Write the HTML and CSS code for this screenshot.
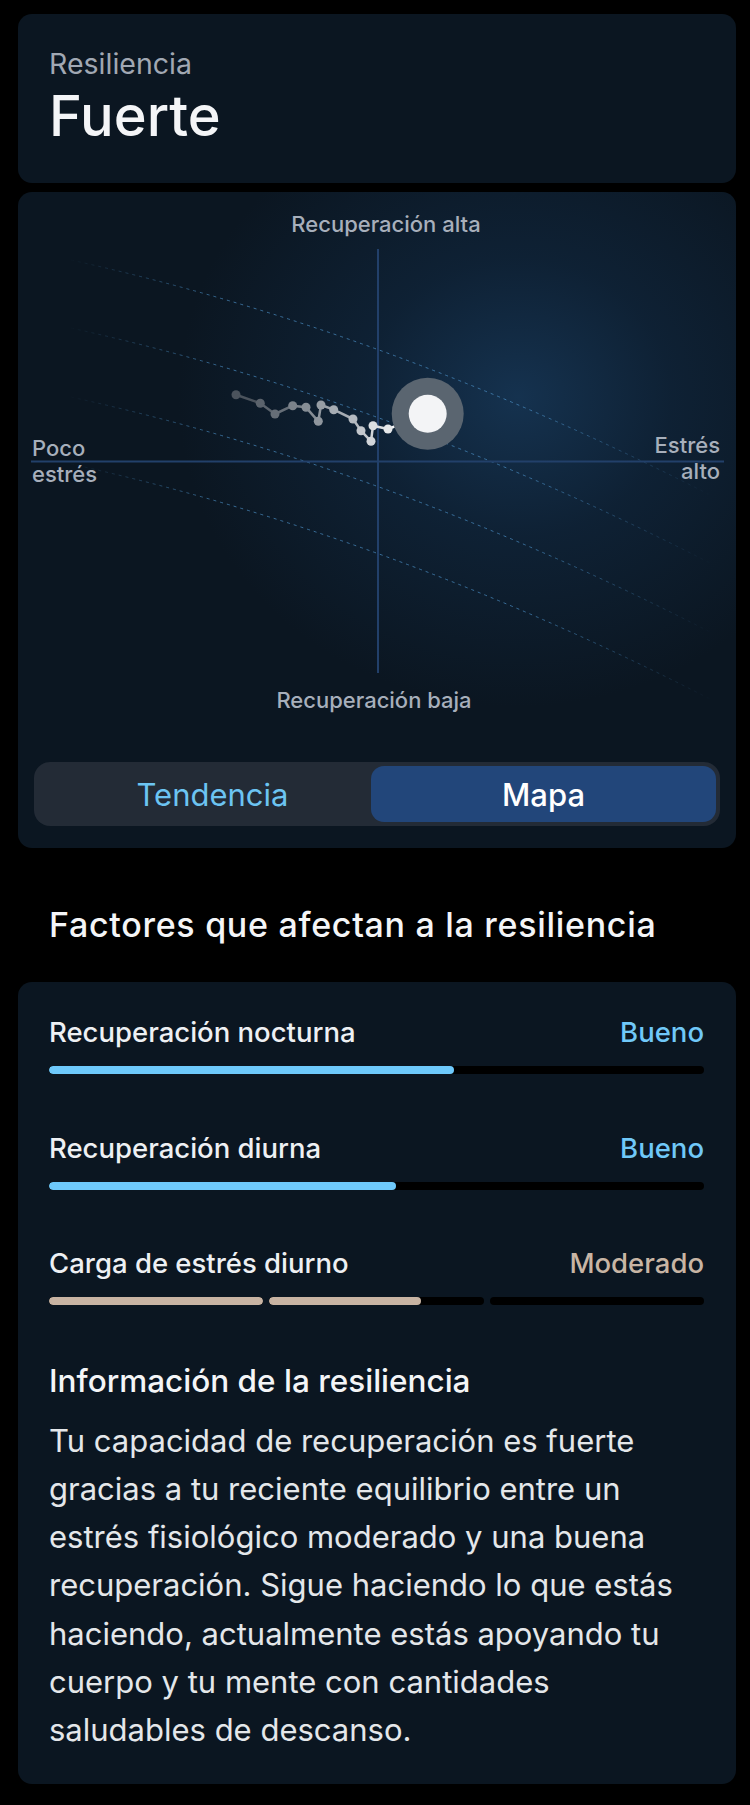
FILE: index.html
```html
<!DOCTYPE html>
<html lang="es">
<head>
    <meta charset="UTF-8">
    <meta name="viewport" content="width=device-width, initial-scale=1.0">
    <title>Resiliencia</title>
    <link rel="stylesheet" href="styles.css">
</head>
<body>
    <!-- Summary -->
    <div class="card summary-card">
        <div class="summary-label">Resiliencia</div>
        <div class="summary-value">Fuerte</div>
    </div>

    <!-- Map -->
    <div class="card map-card">
        <div class="map-plot">
            <svg class="map-svg" viewBox="0 0 718 570" width="718" height="570">
                <defs>
                    <linearGradient id="fade" gradientUnits="userSpaceOnUse" x1="50" y1="0" x2="695" y2="0">
                        <stop offset="0" stop-color="#4a8fc6" stop-opacity="0"/>
                        <stop offset="0.25" stop-color="#4a8fc6" stop-opacity="0.7"/>
                        <stop offset="0.7" stop-color="#4a8fc6" stop-opacity="0.7"/>
                        <stop offset="1" stop-color="#4a8fc6" stop-opacity="0"/>
                    </linearGradient>
                </defs>

                <!-- zone curves -->
                <g fill="none" stroke="url(#fade)" stroke-width="1" stroke-dasharray="3 4">
                    <path d="M53 68 Q371.5 138.5 692 303"/>
                    <path d="M53 136 Q371.5 206.5 692 371"/>
                    <path d="M53 205 Q371.5 275.5 692 440"/>
                    <path d="M53 272 Q371.5 342.5 692 507"/>
                </g>

                <!-- axes -->
                <line x1="360" y1="57" x2="360" y2="481" stroke="#22406a" stroke-width="2"/>
                <line x1="13" y1="269.5" x2="706" y2="269.5" stroke="#22406a" stroke-width="2"/>

                <!-- trail -->
                <g stroke-width="2.5" stroke-linecap="round">
                    <line x1="218" y1="202.7" x2="242.3" y2="211.3" stroke="#4b535c"/>
                    <line x1="242.3" y1="211.3" x2="257" y2="222" stroke="#5b636c"/>
                    <line x1="257" y1="222" x2="274.7" y2="213.7" stroke="#666e77"/>
                    <line x1="274.7" y1="213.7" x2="288" y2="215.3" stroke="#7b828a"/>
                    <line x1="288" y1="215.3" x2="300.3" y2="229.3" stroke="#868d95"/>
                    <line x1="300.3" y1="229.3" x2="303" y2="213" stroke="#8f969e"/>
                    <line x1="303" y1="213" x2="315.7" y2="217.7" stroke="#9aa1a8"/>
                    <line x1="315.7" y1="217.7" x2="335" y2="227" stroke="#a6acb3"/>
                    <line x1="335" y1="227" x2="343" y2="238.7" stroke="#b5bac0"/>
                    <line x1="343" y1="238.7" x2="353" y2="249.3" stroke="#c3c7cc"/>
                    <line x1="353" y1="249.3" x2="355" y2="233.7" stroke="#d2d5d9"/>
                    <line x1="355" y1="233.7" x2="370" y2="237" stroke="#dcdfe2"/>
                    <line x1="370" y1="237" x2="409.7" y2="221.7" stroke="#f2f3f5"/>
                </g>
                <g>
                    <circle cx="218" cy="202.7" r="4.5" fill="#4b535c"/>
                    <circle cx="242.3" cy="211.3" r="4.5" fill="#5b636c"/>
                    <circle cx="257" cy="222" r="4.5" fill="#666e77"/>
                    <circle cx="274.7" cy="213.7" r="4.5" fill="#7b828a"/>
                    <circle cx="288" cy="215.3" r="4.5" fill="#868d95"/>
                    <circle cx="300.3" cy="229.3" r="4.5" fill="#8f969e"/>
                    <circle cx="303" cy="213" r="4.5" fill="#969da4"/>
                    <circle cx="315.7" cy="217.7" r="4.5" fill="#a6acb3"/>
                    <circle cx="335" cy="227" r="4.5" fill="#b5bac0"/>
                    <circle cx="343" cy="238.7" r="4.5" fill="#c3c7cc"/>
                    <circle cx="353" cy="249.3" r="4.5" fill="#d2d5d9"/>
                    <circle cx="355" cy="233.7" r="4.5" fill="#dcdfe2"/>
                    <circle cx="370" cy="237" r="4.5" fill="#e6e8ea"/>
                </g>

                <!-- today -->
                <circle cx="409.7" cy="221.7" r="36" fill="#5a6570"/>
                <circle cx="409.7" cy="221.7" r="19" fill="#f3f4f6"/>
            </svg>

            <div class="axis-label label-top">Recuperación alta</div>
            <div class="axis-label label-bottom">Recuperación baja</div>
            <div class="axis-label label-left">Poco<br>estrés</div>
            <div class="axis-label label-right">Estrés<br>alto</div>
        </div>

        <div class="segmented">
            <button class="segment">Tendencia</button>
            <button class="segment active">Mapa</button>
        </div>
    </div>

    <!-- Factors -->
    <h2 class="section-title">Factores que afectan a la resiliencia</h2>

    <div class="card factors-card">
        <div class="factor">
            <div class="factor-head">
                <span class="factor-name">Recuperación nocturna</span>
                <span class="factor-status good">Bueno</span>
            </div>
            <div class="bar"><div class="bar-fill good-fill" style="width: 61.9%"></div></div>
        </div>

        <div class="factor">
            <div class="factor-head">
                <span class="factor-name">Recuperación diurna</span>
                <span class="factor-status good">Bueno</span>
            </div>
            <div class="bar"><div class="bar-fill good-fill" style="width: 53%"></div></div>
        </div>

        <div class="factor">
            <div class="factor-head">
                <span class="factor-name">Carga de estrés diurno</span>
                <span class="factor-status moderate">Moderado</span>
            </div>
            <div class="bar-segments">
                <div class="bar"><div class="bar-fill moderate-fill" style="width: 100%"></div></div>
                <div class="bar"><div class="bar-fill moderate-fill" style="width: 70.7%"></div></div>
                <div class="bar"></div>
            </div>
        </div>

        <h3 class="info-title">Información de la resiliencia</h3>
        <p class="info-text">
            Tu capacidad de recuperación es fuerte gracias a tu reciente equilibrio entre un estrés fisiológico moderado y una buena recuperación. Sigue haciendo lo que estás haciendo, actualmente estás apoyando tu cuerpo y tu mente con cantidades saludables de descanso.
        </p>
    </div>
</body>
</html>
```

FILE: styles.css
```css
* {
    margin: 0;
    padding: 0;
    box-sizing: border-box;
    font-family: Inter, 'Liberation Sans', sans-serif;
}

body {
    background-color: #000;
    color: #eef0f3;
    padding: 14px 14px 0 18px;
    width: 750px;
}

.card {
    background-color: #0b1621;
    border-radius: 14px;
}

/* Summary */
.summary-card {
    padding: 33px 30px 35px 31px;
}

.summary-label {
    font-size: 28.5px;
    line-height: 34px;
    color: #a1a8b3;
}

.summary-value {
    font-size: 56px;
    line-height: 64px;
    font-weight: 500;
    color: #f4f5f7;
    margin-top: 3px;
}

/* Map */
.map-card {
    margin-top: 9px;
    padding: 0 16px 22px;
    overflow: hidden;
}

.map-plot {
    position: relative;
    height: 570px;
    margin: 0 -16px;
    background: radial-gradient(ellipse 340px 310px at 500px 205px, #15324f 0%, rgba(17, 42, 68, 0.55) 45%, rgba(11, 22, 33, 0) 100%);
}

.map-svg {
    display: block;
}

.axis-label {
    position: absolute;
    font-size: 22px;
    line-height: 26px;
    font-weight: 500;
    color: #a7afbb;
    white-space: nowrap;
}

.label-top {
    top: 19px;
    left: 368px;
    transform: translateX(-50%);
}

.label-bottom {
    top: 495px;
    left: 356px;
    transform: translateX(-50%);
}

.label-left {
    top: 243px;
    left: 14px;
}

.label-right {
    top: 240px;
    right: 16px;
    text-align: right;
}

.segmented {
    display: grid;
    grid-template-columns: 1fr 345px;
    height: 64px;
    padding: 4px;
    background-color: #232b36;
    border-radius: 16px;
}

.segment {
    border: none;
    background: none;
    font-size: 31px;
    color: #6cc4f2;
    border-radius: 13px;
    cursor: pointer;
}

.segment:first-child {
    padding-left: 16px;
}

.segment.active {
    background-color: #22467a;
    color: #fff;
    font-weight: 500;
}

/* Factors */
.section-title {
    font-size: 34px;
    line-height: 40px;
    letter-spacing: 0.7px;
    font-weight: 500;
    color: #f4f5f7;
    margin: 57px 0 37px 31px;
}

.factors-card {
    padding: 33px 32px 29px 31px;
}

.factor + .factor {
    margin-top: 56.5px;
}

.factor-head {
    display: flex;
    justify-content: space-between;
    font-size: 27.5px;
    line-height: 34px;
    font-weight: 500;
    margin-bottom: 17px;
}

.factor-name {
    color: #eef0f3;
}

.good {
    color: #70c8f8;
}

.moderate {
    color: #c8b5a4;
}

.bar {
    height: 8px;
    background-color: #000;
    border-radius: 4px;
    overflow: hidden;
}

.bar-fill {
    height: 100%;
    border-radius: 4px;
}

.good-fill {
    background-color: #6ec9fb;
}

.moderate-fill {
    background-color: #c8b4a3;
}

.bar-segments {
    display: grid;
    grid-template-columns: repeat(3, 1fr);
    gap: 6px;
}

.info-title {
    font-size: 31.5px;
    line-height: 38px;
    font-weight: 500;
    color: #f4f5f7;
    margin-top: 56.5px;
}

.info-text {
    font-size: 31px;
    line-height: 48.3px;
    color: #e4e7ea;
    margin-top: 17px;
}
```
